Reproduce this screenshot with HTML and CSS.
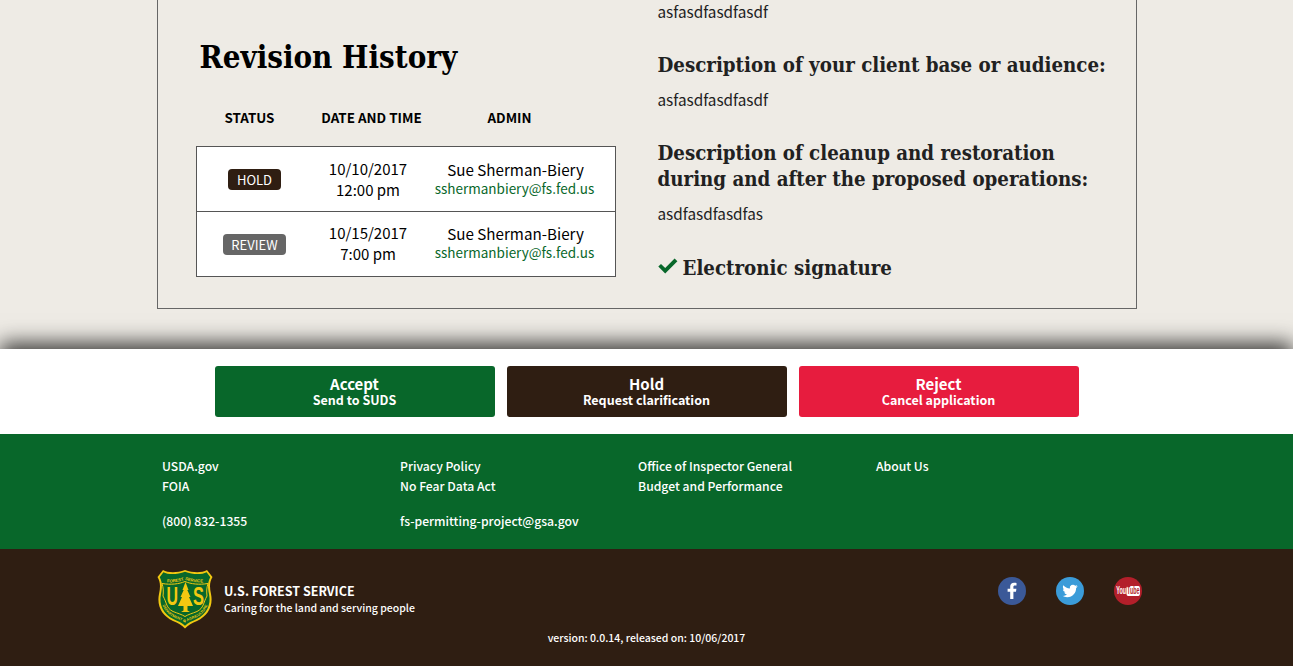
FILE: index.html
```html
<!DOCTYPE html>
<html lang="en">
<head>
<meta charset="utf-8">
<title>Revision History</title>
<link rel="stylesheet" href="styles.css">
</head>
<body>
<main class="main">
  <section class="card">
    <div class="left">
      <h2 class="history-title">Revision History</h2>
      <div class="history-head">
        <span>STATUS</span><span>DATE AND TIME</span><span>ADMIN</span>
      </div>
      <div class="history-table">
        <div class="history-row">
          <div class="status-cell"><span class="badge badge-hold">HOLD</span></div>
          <div class="date-cell">10/10/2017<br>12:00 pm</div>
          <div class="admin-cell"><div class="admin-name">Sue Sherman-Biery</div><a class="admin-mail">sshermanbiery@fs.fed.us</a></div>
        </div>
        <div class="history-row">
          <div class="status-cell"><span class="badge badge-review">REVIEW</span></div>
          <div class="date-cell">10/15/2017<br>7:00 pm</div>
          <div class="admin-cell"><div class="admin-name">Sue Sherman-Biery</div><a class="admin-mail">sshermanbiery@fs.fed.us</a></div>
        </div>
      </div>
    </div>
    <div class="right">
      <p class="answer">asfasdfasdfasdf</p>
      <h3 class="question">Description of your client base or audience:</h3>
      <p class="answer">asfasdfasdfasdf</p>
      <h3 class="question">Description of cleanup and restoration<br>during and after the proposed operations:</h3>
      <p class="answer">asdfasdfasdfas</p>
      <h3 class="question signature">
        <svg class="check" viewBox="0 0 20 16" aria-hidden="true"><path d="M0.300 8.600 L3 5.900 L7.200 10 L16.600 0.600 L19.400 3.300 L7.200 15.400 Z" fill="#08672a"/></svg>
        Electronic signature
      </h3>
    </div>
  </section>
</main>
<section class="actions">
  <button class="action action-accept"><b>Accept</b><small>Send to SUDS</small></button>
  <button class="action action-hold"><b>Hold</b><small>Request clarification</small></button>
  <button class="action action-reject"><b>Reject</b><small>Cancel application</small></button>
</section>
<footer>
  <div class="links">
    <div class="links-col"><a>USDA.gov</a><a>FOIA</a><a class="contact">(800) 832-1355</a></div>
    <div class="links-col"><a>Privacy Policy</a><a>No Fear Data Act</a><a class="contact">fs-permitting-project@gsa.gov</a></div>
    <div class="links-col"><a>Office of Inspector General</a><a>Budget and Performance</a></div>
    <div class="links-col"><a>About Us</a></div>
  </div>
  <div class="brand-bar">
    <div class="brand-row">
      <svg class="shield" viewBox="0 0 56 60" aria-hidden="true">
        <path d="M28 1 C36 4 45 4 50 1 L55.500 8 C52.500 13 52.500 18 54 25 C56.500 37 51 47 40 52 C35 54 31 56 28 59.500 C25 56 21 54 16 52 C5 47 -.500 37 2 25 C3.500 18 3.500 13 .500 8 L6 1 C11 4 20 4 28 1 Z" fill="#f2c811"/>
        <path d="M28 2.800 C36 5.800 45 5.800 49.600 3.200 L53.300 8.200 C50.600 13 50.600 18 52 25 C54.300 36 49.500 45.500 39.300 50.300 C35 52.200 31 53.800 28 56.800 C25 53.800 21 52.200 16.700 50.300 C6.500 45.500 1.700 36 4 25 C5.400 18 5.400 13 2.700 8.200 L6.400 3.200 C11 5.800 20 5.800 28 2.800 Z" fill="#08672a"/>
        <path d="M5 14.500 C14 16 22 15 28 12.500 C34 15 42 16 51 14.500 C49.500 19 49.500 23 50 27 C46 34 47 39 40 42.500 C35 44.500 31 45.500 28 47.500 C25 45.500 21 44.500 16 42.500 C9 39 10 34 6 27 C6.500 23 6.500 19 5 14.500 Z" fill="none" stroke="#f2c811" stroke-width="1"/>
        <path d="M28.500 13 L31.500 21 L30.300 21 L33.500 28 L32 28 L36 37 L30.500 37 L30.500 41.500 L33 43 L24 43 L26.500 41.500 L26.500 37 L21 37 L25 28 L23.500 28 L26.700 21 L25.500 21 Z" fill="#f2c811"/>
        <text class="shield-letter" x="9.500" y="36" textLength="11.500" lengthAdjust="spacingAndGlyphs">U</text>
        <text class="shield-letter" x="36" y="36" textLength="11" lengthAdjust="spacingAndGlyphs">S</text>
        <path id="shield-top" d="M6 13 C15 14 23 13 28 10.500 C33 13 41 14 50 13" fill="none"/>
        <text class="shield-small"><textPath href="#shield-top" startOffset="50%" text-anchor="middle">FOREST SERVICE</textPath></text>
        <path id="shield-bottom" d="M4 29 C5 40 11 46 18 49 C22 50.500 25 51.500 28 54 C31 51.500 34 50.500 38 49 C45 46 51 40 52 29" fill="none"/>
        <text class="shield-tiny"><textPath href="#shield-bottom" startOffset="50%" text-anchor="middle">DEPARTMENT OF AGRICULTURE</textPath></text>
      </svg>
      <div class="brand-text">
        <strong>U.S. FOREST SERVICE</strong>
        <span>Caring for the land and serving people</span>
      </div>
      <div class="social">
        <a class="social-icon social-fb">
          <svg viewBox="0 0 28 28" aria-hidden="true"><path d="M15.400 22 V14.800 H18 L18.400 11.800 H15.400 V10 C15.400 9 15.800 8.500 17 8.500 H18.500 V6 C18 5.900 17 5.800 16 5.800 C13.700 5.800 12.200 7.200 12.200 9.600 V11.800 H9.600 V14.800 H12.200 V22 Z" fill="#fff"/></svg>
        </a>
        <a class="social-icon social-tw">
          <svg viewBox="0 0 24 24" aria-hidden="true"><path transform="translate(5.400 5.400) scale(.55)" d="M23.950 4.570a10 10 0 0 1-2.820.77 4.960 4.960 0 0 0 2.160-2.720c-.95.550-2 .96-3.130 1.190a4.920 4.920 0 0 0-8.380 4.480C7.690 8.100 4.070 6.130 1.640 3.160a4.820 4.820 0 0 0-.67 2.480c0 1.710.87 3.210 2.190 4.100a4.900 4.900 0 0 1-2.230-.62v.06a4.920 4.920 0 0 0 3.950 4.830 5 5 0 0 1-2.210.08 4.940 4.940 0 0 0 4.600 3.420A9.870 9.870 0 0 1 0 19.540a14 14 0 0 0 7.560 2.210c9.050 0 14-7.500 14-13.980 0-.21 0-.42-.02-.63a9.940 9.940 0 0 0 2.460-2.550z" fill="#fff"/></svg>
        </a>
        <a class="social-icon social-yt"><span class="yt-logo"><span class="yt-you">You</span><span class="yt-tube">Tube</span></span></a>
      </div>
    </div>
    <p class="version">version: 0.0.14, released on: 10/06/2017</p>
  </div>
</footer>
</body>
</html>
```
FILE: styles.css
```css
* { box-sizing: border-box; }
html, body { margin: 0; padding: 0; }
body {
  height: 666px;
  overflow: hidden;
  background: #eeebe5;
  color: #000;
  font-family: "Noto Sans CJK JP", "Noto Sans", sans-serif;
  font-size: 15px;
}
.main { height: 349px; }
.card {
  width: 980px;
  height: 309px;
  margin: 0 auto;
  border: 1px solid #666;
  border-top: 0;
  display: flex;
}
.left { width: 500px; padding: 37px 0 0 38px; }
.right { flex: 1; }
.history-title {
  margin: 0 0 0 4px;
  font: 700 31px/40px "DejaVu Serif", serif;
  font-stretch: condensed;
  color: #000;
}
.history-head {
  display: grid;
  grid-template-columns: 108px 136px 140px;
  margin-top: 30px;
  font-size: 13.400px;
  font-weight: 700;
  line-height: 20px;
  text-align: center;
}
.history-table {
  width: 420px;
  margin-top: 19px;
  background: #fff;
  border: 1px solid #555;
  border-bottom: 0;
}
.history-row {
  display: grid;
  grid-template-columns: 116px 111px 182px;
  height: 65px;
  border-bottom: 1px solid #555;
  text-align: center;
}
.status-cell { padding-top: 22px; }
.badge {
  display: inline-block;
  height: 21px;
  padding: 0 8.500px;
  border-radius: 4px;
  color: #fff;
  font-size: 13px;
  line-height: 21px;
  vertical-align: top;
}
.badge-hold { background: #2f1e12; }
.badge-review { background: #666; }
.date-cell { padding-top: 11px; font-size: 15px; line-height: 21px; }
.admin-cell { padding-top: 12px; }
.history-row + .history-row .date-cell { padding-top: 10px; }
.history-row + .history-row .admin-cell { padding-top: 11px; }
.admin-name { padding-left: 2px; font-size: 15.200px; line-height: 20px; }
.admin-mail { display: block; font-size: 13.500px; line-height: 18px; color: #08672a; }
.answer { margin: 9px 0 0; font-size: 15.300px; line-height: 24px; color: #212121; }
.answer:first-child { margin-top: -1px; }
.question {
  margin: 29px 0 0;
  font: 700 20.300px/26px "DejaVu Serif", serif;
  font-stretch: condensed;
  color: #212121;
}
.signature { display: flex; align-items: center; gap: 5px; margin-top: 30px; }
.check { width: 20px; height: 16px; margin-top: -4px; }
.actions {
  position: relative;
  height: 85px;
  padding-top: 17px;
  display: flex;
  justify-content: center;
  gap: 12px;
  background: #fff;
  box-shadow: 0 -6px 20px rgba(0, 0, 0, .76);
}
.action {
  width: 280px;
  height: 51px;
  padding: 0 0 2px;
  border: 0;
  border-radius: 3px;
  color: #fff;
  font-family: inherit;
  display: flex;
  flex-direction: column;
  align-items: center;
  justify-content: center;
}
.action b { font-size: 15px; line-height: 17px; font-weight: 700; }
.action small { font-size: 12.500px; line-height: 15px; font-weight: 700; }
.action-accept { background: #08672a; }
.action-hold { background: #2f1e12; }
.action-reject { background: #e71c3e; }
footer { position: relative; }
.links {
  height: 115px;
  background: #08672a;
  padding: 22px 0 0 162px;
  display: grid;
  grid-template-columns: repeat(4, 238px);
  color: #fff;
  font-size: 12.200px;
  font-weight: 500;
  line-height: 20px;
}
.links-col a { display: block; }
.links-col .contact { margin-top: 15px; }
.brand-bar { height: 117px; background: #2f1e12; color: #fff; padding-top: 20px; }
.brand-row { display: flex; align-items: flex-start; padding-left: 157px; height: 60px; }
.shield { width: 56px; height: 60px; flex: none; }
.shield-letter { font: 700 25px "Liberation Sans", sans-serif; fill: #f2c811; }
.shield-small { font: 700 4.300px "Liberation Sans", sans-serif; fill: #f2c811; }
.shield-tiny { font: 700 3.700px "Liberation Sans", sans-serif; fill: #f2c811; }
.brand-text { margin: 14px 0 0 11px; display: flex; flex-direction: column; width: 350px; }
.brand-text strong { font-size: 12.500px; line-height: 16px; font-weight: 700; }
.brand-text span { font-size: 10.500px; line-height: 17px; font-weight: 500; }
.social { margin: 8px 0 0 424px; display: flex; gap: 30px; }
.social-icon {
  width: 28px;
  height: 28px;
  border-radius: 50%;
  display: flex;
  align-items: center;
  justify-content: center;
}
.social-icon svg { width: 28px; height: 28px; }
.social-fb { background: #3b5998; }
.social-tw { background: #3b9cd9; }
.social-yt { background: #b31f2a; color: #fff; font: 700 10px/10px "Liberation Sans", sans-serif; }
.yt-logo { display: inline-flex; flex: none; transform: scaleX(.54); }
.yt-tube { background: #fff; color: #b31f2a; border-radius: 3px; padding: 0 1px; margin-left: 1px; }
.version { margin: 1px 0 0; font-size: 10.500px; font-weight: 500; line-height: 16px; text-align: center; }
```
